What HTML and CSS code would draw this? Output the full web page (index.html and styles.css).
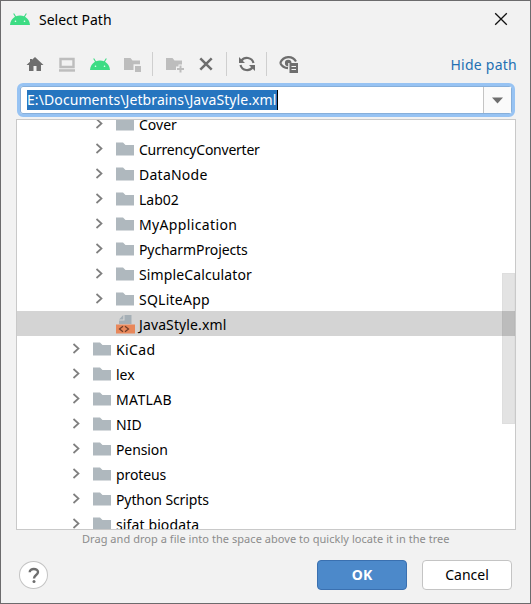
FILE: index.html
```html
<!DOCTYPE html>
<html lang="en">
<head>
<meta charset="utf-8">
<title>Select Path</title>
<link rel="stylesheet" href="styles.css">
</head>
<body>
<svg class="defs" width="0" height="0">
  <symbol id="android" viewBox="0 0 20 12">
    <path d="M0 12C.3 8.3 2.200 5.300 5 3.800L3.200.8 4.100.2 6 3.300C8.400 2.200 11.600 2.200 14 3.300L15.900.2 16.800.8 15 3.800C17.800 5.300 19.700 8.300 20 12Z" fill="#3ddc84"/>
    <circle cx="5.500" cy="8.300" r=".8" fill="#e8fff2"/><circle cx="14.500" cy="8.300" r=".8" fill="#e8fff2"/>
  </symbol>
  <symbol id="folder" viewBox="0 0 18 14">
    <path d="M0 .5H7L9.500 3H18V13.500H0Z" fill="#afb8be"/>
  </symbol>
  <symbol id="chevron" viewBox="0 0 8 12">
    <path d="M1.500 1 6.500 5.500 1.500 10" fill="none" stroke="#7f7f7f" stroke-width="1.700"/>
  </symbol>
</svg>
<main class="dialog">
  <header class="titlebar">
    <svg class="logo" width="20" height="12"><use href="#android"/></svg>
    <h1>Select Path</h1>
    <svg class="close" width="14" height="14" viewBox="0 0 14 14"><path d="M1.200 1.200 12.800 12.800M12.800 1.200 1.200 12.800" stroke="#111" stroke-width="1.300"/></svg>
  </header>
  <nav class="toolbar">
    <svg class="home" width="18" height="18" viewBox="0 0 18 18"><path d="M9 2 17.500 10H15V16H10.500V11H7.500V16H3V10H.5L4 6.700V4H6V4.800Z" fill="#6e6e6e"/></svg>
    <svg class="desktop" width="16" height="18" viewBox="0 0 16 18"><path d="M1.500 4H14.500V12H1.500Z" fill="none" stroke="#bdbdbd" stroke-width="2.400"/><path d="M0 14.200H16V16.700H0Z" fill="#bdbdbd"/></svg>
    <svg class="project" width="20" height="12"><use href="#android"/></svg>
    <svg class="module" width="18" height="18" viewBox="0 0 18 18"><path d="M0 3H6.500L8.500 5.500H16V9.300H9.500V15H0Z" fill="#bdbdbd"/><path d="M11 11H17V17H11Z" fill="#bdbdbd"/></svg>
    <i class="sep"></i>
    <svg class="newfolder" width="19" height="18" viewBox="0 0 19 18"><path d="M0 3H6.500L8.500 5.500H16V9.500H12.500V11.500H10V15H0Z" fill="#bdbdbd"/><path d="M14.500 10.500V17.500M11 14H18" stroke="#bdbdbd" stroke-width="2"/></svg>
    <svg class="delete" width="14" height="14" viewBox="0 0 14 14"><path d="M1.300 1.300 12.700 12.700M12.700 1.300 1.300 12.700" stroke="#6e6e6e" stroke-width="2.500"/></svg>
    <i class="sep"></i>
    <svg class="refresh" width="18" height="18" viewBox="0 0 18 18"><g fill="none" stroke="#6e6e6e" stroke-width="2.200"><path d="M3.500 5.500C6.500 1.500 13.800 2 15.500 8"/><path d="M14.500 12.500C11.500 16.500 4.200 16 2.500 10"/></g><path d="M1 2V8H7ZM17 16V10H11Z" fill="#6e6e6e"/></svg>
    <i class="sep"></i>
    <svg class="hidden" width="20" height="18" viewBox="0 0 20 18"><path d="M1.200 8C4.500.5 13.500.5 17 6.500M1.200 8C3 11.500 5.500 13 9 13.200" fill="none" stroke="#6e6e6e" stroke-width="2.200"/><path d="M9.200 4.800A3.300 3.300 0 1 0 9.200 11.400V8H12.500A3.300 3.300 0 0 0 9.200 4.800Z" fill="#6e6e6e"/><path d="M10.500 8H19V18H10.500Z" fill="#6e6e6e"/><path d="M12.500 11.500H17M12.500 14.500H17" stroke="#f2f2f2" stroke-width="1.200"/></svg>
    <a class="hide"><span>Hide path</span></a>
  </nav>
  <div class="combo">
    <div class="field"><span class="selection"><span class="path">E:\Documents\Jetbrains\JavaStyle.xml</span></span></div>
    <div class="arrow"><svg width="11" height="7" viewBox="0 0 11 7"><path d="M0 .5H11L5.500 6.500Z" fill="#6e6e6e"/></svg></div>
  </div>
  <section class="tree">
    <ul>
      <li class="deep"><svg class="chev"><use href="#chevron"/></svg><svg class="dir"><use href="#folder"/></svg><span>Cover</span></li>
      <li class="deep tight"><svg class="chev"><use href="#chevron"/></svg><svg class="dir"><use href="#folder"/></svg><span>CurrencyConverter</span></li>
      <li class="deep loose"><svg class="chev"><use href="#chevron"/></svg><svg class="dir"><use href="#folder"/></svg><span>DataNode</span></li>
      <li class="deep"><svg class="chev"><use href="#chevron"/></svg><svg class="dir"><use href="#folder"/></svg><span>Lab02</span></li>
      <li class="deep looser"><svg class="chev"><use href="#chevron"/></svg><svg class="dir"><use href="#folder"/></svg><span>MyApplication</span></li>
      <li class="deep snug"><svg class="chev"><use href="#chevron"/></svg><svg class="dir"><use href="#folder"/></svg><span>PycharmProjects</span></li>
      <li class="deep airy"><svg class="chev"><use href="#chevron"/></svg><svg class="dir"><use href="#folder"/></svg><span>SimpleCalculator</span></li>
      <li class="deep loose"><svg class="chev"><use href="#chevron"/></svg><svg class="dir"><use href="#folder"/></svg><span>SQLiteApp</span></li>
      <li class="file selected airy"><svg class="xml" width="19" height="20" viewBox="0 0 19 20"><path d="M8.500 1H15.500V10H3V6.500H8.500Z" fill="#a5afb6"/><path d="M7.300 1V5.500H3Z" fill="#a5afb6"/><path d="M0 10.500H19V19.500H0Z" fill="#e8875a"/><path d="M7 12.300 3.500 15 7 17.700M9 12.300 12.500 15 9 17.700" fill="none" stroke="#6b3b28" stroke-width="1.200"/></svg><span>JavaStyle.xml</span></li>
      <li class="looser"><svg class="chev"><use href="#chevron"/></svg><svg class="dir"><use href="#folder"/></svg><span>KiCad</span></li>
      <li><svg class="chev"><use href="#chevron"/></svg><svg class="dir"><use href="#folder"/></svg><span>lex</span></li>
      <li class="looser"><svg class="chev"><use href="#chevron"/></svg><svg class="dir"><use href="#folder"/></svg><span>MATLAB</span></li>
      <li><svg class="chev"><use href="#chevron"/></svg><svg class="dir"><use href="#folder"/></svg><span>NID</span></li>
      <li class="snug"><svg class="chev"><use href="#chevron"/></svg><svg class="dir"><use href="#folder"/></svg><span>Pension</span></li>
      <li class="snug"><svg class="chev"><use href="#chevron"/></svg><svg class="dir"><use href="#folder"/></svg><span>proteus</span></li>
      <li class="snug"><svg class="chev"><use href="#chevron"/></svg><svg class="dir"><use href="#folder"/></svg><span>Python Scripts</span></li>
      <li class="airy"><svg class="chev"><use href="#chevron"/></svg><svg class="dir"><use href="#folder"/></svg><span>sifat biodata</span></li>
    </ul>
    <div class="scrollbar"></div>
  </section>
  <p class="hint">Drag and drop a file into the space above to quickly locate it in the tree</p>
  <footer class="actions">
    <button class="help"><svg width="12" height="17" viewBox="0 0 12 17"><path d="M1.700 5.200C1.700.8 10 1 10 5 10 8 6 8 6 11.500" fill="none" stroke="#6e6e6e" stroke-width="2.400"/><circle cx="6" cy="14.600" r="1.500" fill="#6e6e6e"/></svg></button>
    <button class="btn ok">OK</button>
    <button class="btn cancel">Cancel</button>
  </footer>
</main>
</body>
</html>
```
FILE: styles.css
```css
* { box-sizing: border-box; }
body {
  margin: 0;
  width: 531px;
  height: 604px;
  overflow: hidden;
  background: #77767a;
  color: #000;
  font: 14px/20px "Noto Sans", "Open Sans", sans-serif;
}
svg { display: block; flex: none; }
.defs { position: absolute; }
.dialog {
  display: flex;
  flex-direction: column;
  width: 531px;
  height: 604px;
  border: 1px solid #6c6b6d;
  background: #f2f2f2;
}
.titlebar {
  display: flex;
  align-items: center;
  height: 37px;
  padding: 0 22px 0 9px;
}
h1 { margin: 0 auto 0 9px; font-size: 14px; font-weight: 400; }
.logo, .close { position: relative; top: -.5px; }
.toolbar {
  display: flex;
  align-items: center;
  height: 45px;
  padding: 7px 13px 0 25px;
}
.desktop { margin-left: 15px; }
.project { margin-left: 15px; }
.module { margin-left: 14px; }
.sep { width: 1px; height: 24px; background: #cfcfcf; margin-left: 10px; }
.newfolder { margin-left: 13px; }
.delete { margin-left: 14px; }
.delete + .sep { margin-left: 13px; }
.refresh { margin-left: 11px; }
.hidden { margin-left: 12px; }
.hide { margin-left: auto; color: #2470b3; letter-spacing: .25px; }
.hide span { position: relative; top: 1px; }
.combo {
  display: flex;
  flex: none;
  width: 498px;
  height: 34px;
  margin-left: 16px;
  border: 3px solid #97c3f3;
  border-radius: 6px;
  background: #fff;
  box-shadow: inset 0 0 0 1px #87afda;
}
.field { flex: 1; padding: 4px 0 0 7px; }
.selection {
  display: block;
  width: 251px;
  height: 20px;
  background: #2675bf;
  border-right: 1px solid #000;
  color: #fff;
  letter-spacing: .09px;
  white-space: nowrap;
}
.arrow {
  display: flex;
  align-items: center;
  justify-content: center;
  width: 28px;
  margin: 1px 1px 1px 0;
  border-left: 1px solid #c4c4c4;
  background: #fafafa;
}
.tree {
  position: relative;
  flex: none;
  height: 411px;
  width: 500px;
  margin: 2px 0 0 15px;
  border: 1px solid #c9c9c9;
  background: #fff;
  overflow: hidden;
}
ul { margin: -9px 0 0; padding: 0; list-style: none; }
li { display: flex; align-items: center; height: 25px; padding-left: 55px; white-space: nowrap; }
li span { margin-left: 5px; padding-top: 2px; }
.deep { padding-left: 78px; }
.file { padding-left: 99px; }
.file span { margin-left: 4px; }
.selected { background: #d4d4d4; }
.chev { width: 8px; height: 12px; }
.dir { width: 18px; height: 14px; margin-left: 13px; }
.tight { letter-spacing: -.24px; }
.snug { letter-spacing: -.1px; }
.airy { letter-spacing: .12px; }
.loose { letter-spacing: .25px; }
.looser { letter-spacing: .36px; }
.scrollbar {
  position: absolute;
  right: 0;
  top: 153px;
  width: 13px;
  height: 151px;
  border: 1px solid rgba(0, 0, 0, .02);
  background: rgba(0, 0, 0, .11);
}
.hint {
  margin: 0 0 0 81px;
  height: 19px;
  font-size: 11px;
  line-height: 17px;
  letter-spacing: .045px;
  color: #8c8c8c;
  white-space: nowrap;
}
.actions {
  display: flex;
  align-items: center;
  box-sizing: content-box;
  height: 32px;
  padding: 10px 18px 0;
}
.help {
  display: flex;
  align-items: center;
  justify-content: center;
  width: 29px;
  height: 28px;
  padding: 0;
  border: 1px solid #c4c4c4;
  border-radius: 50%;
  background: #fff;
}
.btn {
  width: 90px;
  height: 30px;
  margin-left: 15px;
  padding: 0;
  border: 1px solid #c4c4c4;
  border-radius: 4px;
  background: #fff;
  color: #000;
  font: 14px/20px "Noto Sans", sans-serif;
}
.ok { margin-left: auto; border-color: #3a70b0; background: #4c89ca; color: #fff; font-weight: 700; }
```
